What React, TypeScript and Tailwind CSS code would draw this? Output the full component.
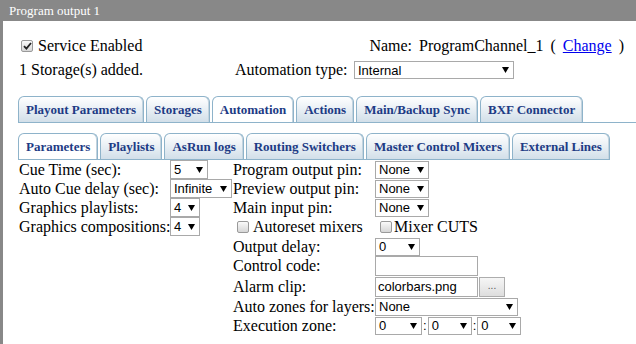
import React from "react";

const serif = "font-['Liberation_Serif','Times_New_Roman',serif]";
const sans = "font-['Liberation_Sans',Arial,sans-serif]";

function Arrow() {
  return (
    <svg width="7" height="6" viewBox="0 0 7 6" className="shrink-0">
      <polygon points="0,0 7,0 3.5,6" fill="#000" />
    </svg>
  );
}

function Sel({ className, text }: { className: string; text: string }) {
  return (
    <div
      className={`flex items-center justify-between box-border border border-[#a9a9a9] bg-white pl-[3px] pr-[4px] text-[13px] leading-none text-black ${sans} ${className}`}
    >
      <span>{text}</span>
      <Arrow />
    </div>
  );
}

function CheckBox({ checked }: { checked?: boolean }) {
  return (
    <span className="inline-flex h-[12px] w-[12px] shrink-0 items-center justify-center rounded-[2px] border border-[#9a9a9a] bg-gradient-to-b from-[#fafafa] to-[#d6d6d6]">
      {checked && (
        <svg width="9" height="8" viewBox="0 0 9 8">
          <path d="M1 4.2 L3.4 6.6 L8 1" stroke="#222" strokeWidth="1.8" fill="none" />
        </svg>
      )}
    </span>
  );
}

function Tab({ label, active }: { label: string; active?: boolean }) {
  return (
    <div
      className={`flex h-[26px] items-center rounded-t-[6px] border border-b-0 border-[#8eb3ca] px-[7px] text-[13px] font-bold text-[#1d3b85] shadow-[inset_-1px_0_0_#c3d3de] ${
        active ? "bg-white" : "bg-gradient-to-b from-[#ffffff] to-[#d2dfe9]"
      }`}
    >
      {label}
    </div>
  );
}

function LRow({ label, children }: { label: string; children: React.ReactNode }) {
  return (
    <div className="flex h-[19px] items-center">
      <div className="w-[151px] whitespace-nowrap">{label}</div>
      {children}
    </div>
  );
}

function RRow({ label, h, children }: { label: string; h: string; children?: React.ReactNode }) {
  return (
    <div className={`flex items-center ${h}`}>
      <div className="w-[143px] whitespace-nowrap pl-[1px]">{label}</div>
      {children}
    </div>
  );
}

export default function App() {
  return (
    <div className={`flex h-[344px] w-[636px] flex-col overflow-hidden bg-white text-[16px] text-black ${serif}`}>
      <div className="flex h-[21px] shrink-0 items-center bg-[#888888] pl-[9px] text-[13px] text-white">
        Program output 1
      </div>
      <div className="flex-1 border-l-[3px] border-[#888888] pt-[15px]">
        <div className="flex h-[19px] items-center justify-between pr-[12px]">
          <div className="flex items-center pl-[18px]">
            <CheckBox checked />
            <span className="ml-[5px]">Service Enabled</span>
          </div>
          <div className="flex items-center gap-[7px] whitespace-nowrap">
            <span>Name:</span>
            <span>ProgramChannel_1</span>
            <span>(</span>
            <span className="text-[#0000ee] underline">Change</span>
            <span>)</span>
          </div>
        </div>
        <div className="mt-[6px] flex h-[18px] items-center pl-[16px]">
          <div className="w-[216px]">1 Storage(s) added.</div>
          <div className="w-[119px]">Automation type:</div>
          <Sel className="h-[18px] w-[160px]" text="Internal" />
        </div>

        <div className="ml-[15px] mt-[17px] flex items-end gap-[2px] border-b border-[#8eb3ca]">
          <Tab label="Playout Parameters" />
          <Tab label="Storages" />
          <Tab label="Automation" active />
          <Tab label="Actions" />
          <Tab label="Main/Backup Sync" />
          <Tab label="BXF Connector" />
        </div>

        <div className="ml-[15px] mt-[10px] flex w-fit items-end gap-[2px] border-b border-[#8eb3ca]">
          <Tab label="Parameters" active />
          <Tab label="Playlists" />
          <Tab label="AsRun logs" />
          <Tab label="Routing Switchers" />
          <Tab label="Master Control Mixers" />
          <Tab label="External Lines" />
        </div>

        <div className="flex pl-[16px]">
          <div className="flex w-[213px] flex-col">
            <LRow label="Cue Time (sec):">
              <Sel className="h-[19px] w-[38px]" text="5" />
            </LRow>
            <LRow label="Auto Cue delay (sec):">
              <Sel className="h-[19px] w-[62px] pl-[2px] pr-[2px]" text="Infinite" />
            </LRow>
            <LRow label="Graphics playlists:">
              <Sel className="h-[19px] w-[30px]" text="4" />
            </LRow>
            <LRow label="Graphics compositions:">
              <Sel className="h-[19px] w-[30px]" text="4" />
            </LRow>
          </div>
          <div className="flex flex-col">
            <RRow label="Program output pin:" h="h-[19px]">
              <Sel className="h-[18px] w-[54px]" text="None" />
            </RRow>
            <RRow label="Preview output pin:" h="h-[19px]">
              <Sel className="h-[18px] w-[54px]" text="None" />
            </RRow>
            <RRow label="Main input pin:" h="h-[19px]">
              <Sel className="h-[18px] w-[54px]" text="None" />
            </RRow>
            <div className="flex h-[20px] items-center">
              <div className="flex w-[148px] items-center pl-[5px]">
                <CheckBox />
                <span className="ml-[4px]">Autoreset mixers</span>
              </div>
              <CheckBox />
              <span className="ml-[2px]">Mixer CUTS</span>
            </div>
            <RRow label="Output delay:" h="h-[19px]">
              <Sel className="h-[18px] w-[45px]" text="0" />
            </RRow>
            <RRow label="Control code:" h="h-[20px]">
              <div className="box-border h-[20px] w-[103px] border border-[#a9a9a9] bg-white" />
            </RRow>
            <RRow label="Alarm clip:" h="h-[21px]">
              <div
                className={`box-border flex h-[20px] w-[103px] items-center border border-[#a9a9a9] bg-white pl-[2px] text-[13px] ${sans}`}
              >
                colorbars.png
              </div>
              <div
                className={`ml-[1px] box-border flex h-[20px] w-[26px] items-center justify-center border border-[#adadad] bg-gradient-to-b from-[#f6f6f6] to-[#dedede] pb-[3px] text-[10px] text-[#555] ${sans}`}
              >
                ...
              </div>
            </RRow>
            <RRow label="Auto zones for layers:" h="h-[19px]">
              <Sel className="h-[18px] w-[143px]" text="None" />
            </RRow>
            <RRow label="Execution zone:" h="h-[19px]">
              <Sel className="h-[18px] w-[47px]" text="0" />
              <span className={`px-[1px] text-[13px] ${sans}`}>:</span>
              <Sel className="h-[18px] w-[44px]" text="0" />
              <span className={`px-[1px] text-[13px] ${sans}`}>:</span>
              <Sel className="h-[18px] w-[44px]" text="0" />
            </RRow>
          </div>
        </div>
      </div>
    </div>
  );
}
